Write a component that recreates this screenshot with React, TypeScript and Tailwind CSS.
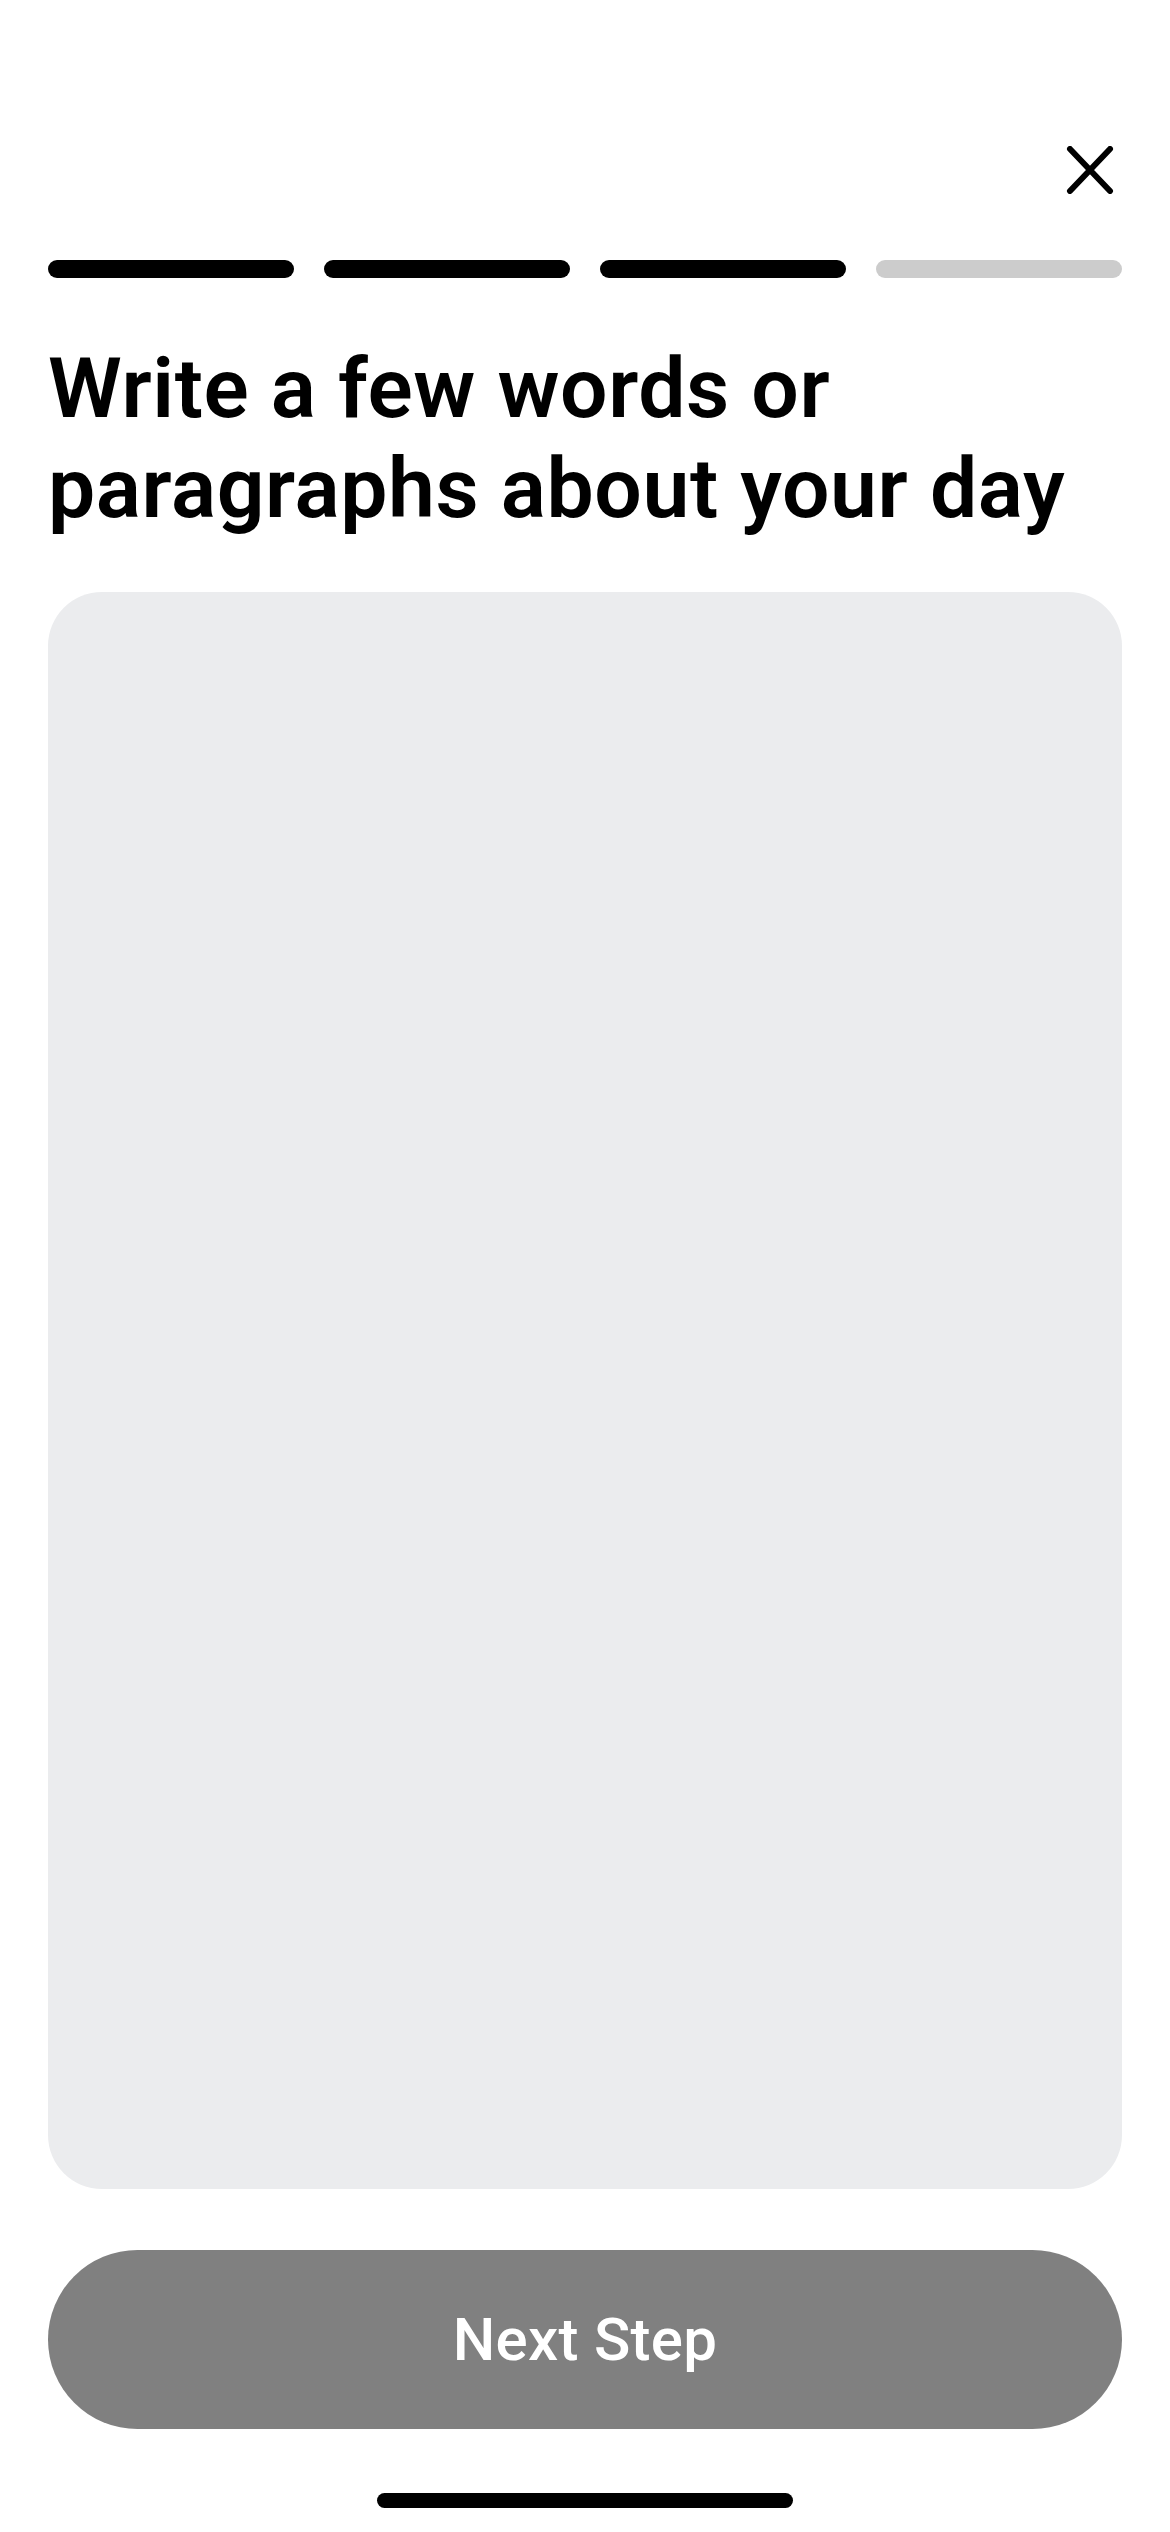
import React from 'react';

const STEPS = [true, true, true, false];

export default function App() {
  return (
    <div className="w-[1170px] h-[2532px] bg-white flex flex-col px-12 font-['Roboto',sans-serif] text-black">
      <div className="pt-[146px] flex justify-end">
        <button className="w-12 h-12 mr-2 flex items-center justify-center" aria-label="Close">
          <svg width="48" height="48" viewBox="0 0 48 48" fill="none">
            <path d="M4 3 L44 45 M44 3 L4 45" stroke="#000" strokeWidth="6" strokeLinecap="round" />
          </svg>
        </button>
      </div>

      <div className="mt-[66px] flex gap-[30px]">
        {STEPS.map((done, i) => (
          <div key={i} className={`flex-1 h-[18px] rounded-full ${done ? 'bg-black' : 'bg-[#cccccc]'}`} />
        ))}
      </div>

      <h1 className="mt-[61px] text-[84px] leading-[100px] font-semibold tracking-[0.6px]">
        Write a few words or
        <br />
        paragraphs about your day
      </h1>

      <textarea className="mt-[53px] h-[1597px] w-full rounded-[54px] bg-[#ebecee] resize-none outline-none p-12 text-[54px]" />

      <button className="mt-[61px] h-[179px] w-full rounded-full bg-[#808080] text-white text-[60px] font-medium tracking-[0.3px]">
        Next Step
      </button>

      <div className="mt-[64px] flex justify-center">
        <div className="w-[416px] h-[15px] rounded-full bg-black" />
      </div>
    </div>
  );
}
